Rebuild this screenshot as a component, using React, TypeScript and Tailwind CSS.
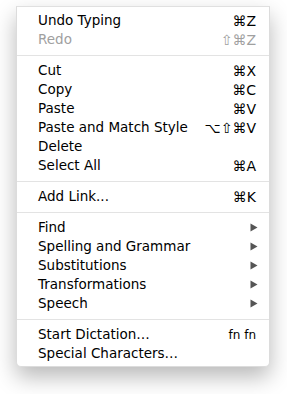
import React from "react";

type Item =
  | { sep: true }
  | { sep?: false; label: string; shortcut?: string; disabled?: boolean; sub?: boolean; small?: boolean };

const items: Item[] = [
  { label: "Undo Typing", shortcut: "⌘Z" },
  { label: "Redo", shortcut: "⇧⌘Z", disabled: true },
  { sep: true },
  { label: "Cut", shortcut: "⌘X" },
  { label: "Copy", shortcut: "⌘C" },
  { label: "Paste", shortcut: "⌘V" },
  { label: "Paste and Match Style", shortcut: "⌥⇧⌘V" },
  { label: "Delete" },
  { label: "Select All", shortcut: "⌘A" },
  { sep: true },
  { label: "Add Link...", shortcut: "⌘K" },
  { sep: true },
  { label: "Find", sub: true },
  { label: "Spelling and Grammar", sub: true },
  { label: "Substitutions", sub: true },
  { label: "Transformations", sub: true },
  { label: "Speech", sub: true },
  { sep: true },
  { label: "Start Dictation…", shortcut: "fn fn", small: true },
  { label: "Special Characters…" },
];

function Arrow() {
  return (
    <svg width="8" height="9" viewBox="0 0 8 9" className="block mr-[-2px]">
      <path d="M0.5 0.5 L7.5 4.5 L0.5 8.5 Z" fill="#555" />
    </svg>
  );
}

export default function App() {
  return (
    <div className="w-[287px] h-[394px] bg-white pt-[6px] pl-[16px]" style={{ fontFamily: '"DejaVu Sans", sans-serif' }}>
      <div className="w-[254px] h-[361px] bg-white border border-[#dcdcdc] border-t-[#e0e0e0] rounded-b-[5px] shadow-[0_10px_22px_rgba(0,0,0,0.28)] pt-[4px]">
        {items.map((it, i) =>
          it.sep ? (
            <div key={i} className="h-[12px] flex items-center">
              <div className="h-px w-full bg-[#e3e3e3]" />
            </div>
          ) : (
            <div
              key={i}
              className={`h-[19px] flex items-center pl-[21px] pr-[13px] text-[13.5px] leading-none ${it.disabled ? "text-[#a0a0a0]" : "text-black"}`}
            >
              <span className="flex-1 whitespace-nowrap">{it.label}</span>
              {it.shortcut && (
                <span className={`whitespace-nowrap ${it.small ? "text-[12px]" : "text-[14px]"}`}>{it.shortcut}</span>
              )}
              {it.sub && <Arrow />}
            </div>
          )
        )}
      </div>
    </div>
  );
}
